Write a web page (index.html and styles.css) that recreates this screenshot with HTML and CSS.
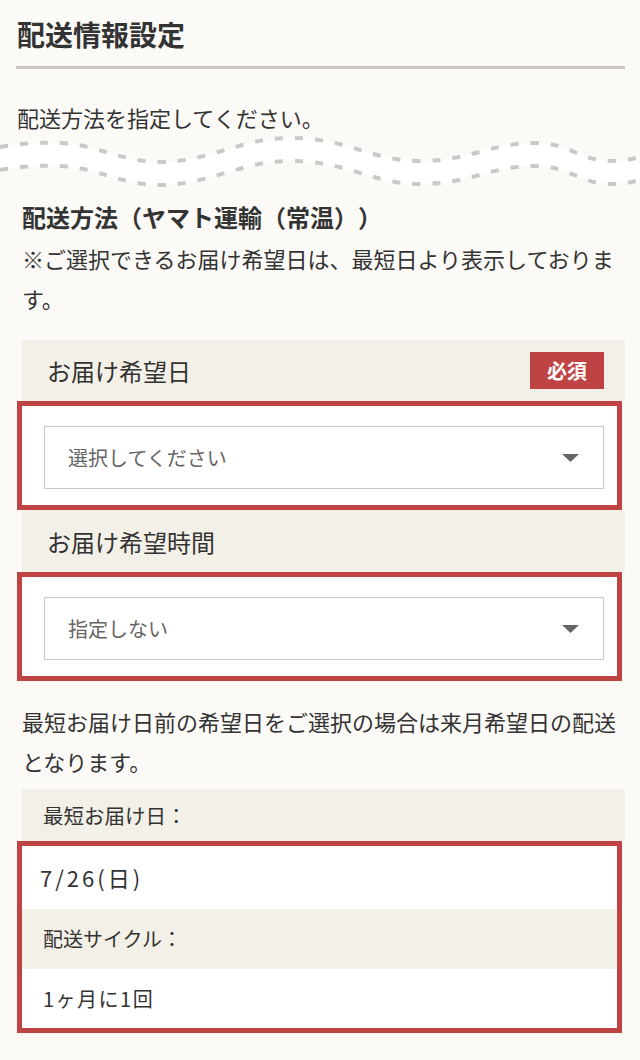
FILE: index.html
```html
<!DOCTYPE html>
<html lang="ja">
<head>
    <meta charset="UTF-8">
    <meta name="viewport" content="width=device-width, initial-scale=1.0">
    <title>配送情報設定</title>
    <link rel="stylesheet" href="styles.css">
</head>
<body>

<div class="page-head">
    <h1>配送情報設定</h1>
</div>
<p class="intro">配送方法を指定してください。</p>

<!-- wavy divider -->
<svg class="wave" viewBox="0 0 640 60" width="640" height="60">
    <path class="wave-band" d="M0 14 C25 10, 45 9, 60 10 C100 12, 120 29, 160 29 C210 29, 240 5, 290 5 C350 5, 370 28, 420 28 C470 28, 490 10, 535 10 C570 10, 580 28, 610 28 C625 28, 632 26, 640 24" transform="translate(0 11.5)"/>
    <path class="wave-line" d="M0 14 C25 10, 45 9, 60 10 C100 12, 120 29, 160 29 C210 29, 240 5, 290 5 C350 5, 370 28, 420 28 C470 28, 490 10, 535 10 C570 10, 580 28, 610 28 C625 28, 632 26, 640 24"/>
    <path class="wave-line" d="M0 14 C25 10, 45 9, 60 10 C100 12, 120 29, 160 29 C210 29, 240 5, 290 5 C350 5, 370 28, 420 28 C470 28, 490 10, 535 10 C570 10, 580 28, 610 28 C625 28, 632 26, 640 24" transform="translate(0 23)"/>
</svg>

<div class="section">
    <h2>配送方法（ヤマト運輸（常温））</h2>
    <p class="note">※ご選択できるお届け希望日は、最短日より表示しております。</p>

    <div class="field-label label-date">
        <span>お届け希望日</span>
        <span class="badge">必須</span>
    </div>
    <div class="marked">
        <div class="select">
            <span>選択してください</span>
            <svg class="arrow" viewBox="0 0 17 8" width="17" height="8"><polygon points="0,0 17,0 8.5,8"/></svg>
        </div>
    </div>

    <div class="field-label label-time">
        <span>お届け希望時間</span>
    </div>
    <div class="marked">
        <div class="select">
            <span>指定しない</span>
            <svg class="arrow" viewBox="0 0 17 8" width="17" height="8"><polygon points="0,0 17,0 8.5,8"/></svg>
        </div>
    </div>

    <p class="note note-next">最短お届け日前の希望日をご選択の場合は来月希望日の配送となります。</p>

    <div class="info-label">最短お届け日：</div>
    <div class="marked marked-info">
        <div class="info-value value-date">7/26(日)</div>
        <div class="info-label inner-label">配送サイクル：</div>
        <div class="info-value value-cycle">1ヶ月に1回</div>
    </div>
</div>

</body>
</html>
```

FILE: styles.css
```css
body {
    margin: 0;
    background-color: #fbfaf6;
    color: #333;
    font-family: "Noto Sans CJK JP", "Noto Sans", sans-serif;
    text-spacing-trim: space-all;
}
.page-head {
    margin: 0 15px 0 16px;
    padding: 16px 1px 14px;
    border-bottom: 3px solid #cdc8bd;
}
h1 {
    margin: 0;
    font-size: 28px;
    line-height: 36px;
    font-weight: bold;
}
.intro {
    margin: 0;
    padding: 33px 17px 0;
    font-size: 22px;
    line-height: 30px;
}
.wave {
    display: block;
    margin-top: 1px;
}
.wave-band {
    fill: none;
    stroke: #fff;
    stroke-width: 22;
}
.wave-line {
    fill: none;
    stroke: #c9c9c9;
    stroke-width: 4;
    stroke-dasharray: 8 12;
}
.section {
    padding: 0 15px 0 22px;
}
h2 {
    margin: 7px 0 0;
    font-size: 24px;
    line-height: 34px;
    font-weight: bold;
}
.note {
    margin: 4px 0 0;
    font-size: 22px;
    line-height: 40px;
}
.field-label {
    display: flex;
    justify-content: space-between;
    align-items: center;
    background-color: #f3f0e8;
    padding: 0 21px 0 25px;
    font-size: 24px;
}
.label-date {
    margin-top: 22px;
    height: 61px;
}
.label-time {
    height: 62px;
}
.badge {
    width: 74px;
    height: 37px;
    line-height: 37px;
    text-align: center;
    background-color: #c04343;
    color: #fff;
    font-size: 20px;
    font-weight: bold;
}
.marked {
    margin: 0 3px 0 -5px;
    border: 5px solid #c04343;
    background-color: #fff;
    padding: 20px 13px 16px 22px;
}
.select {
    display: flex;
    justify-content: space-between;
    align-items: center;
    height: 61px;
    border: 1px solid #c9c9c9;
    padding: 0 24px 0 23px;
    color: #666;
    font-size: 20px;
}
.arrow {
    fill: #666;
}
.note-next {
    margin-top: 20px;
}
.info-label {
    margin-top: 8px;
    height: 52px;
    line-height: 52px;
    padding-left: 21px;
    background-color: #f3f0e8;
    font-size: 20.5px;
}
.marked-info {
    padding: 0;
}
.inner-label {
    margin: 0;
    height: 60px;
    line-height: 60px;
    font-size: 20px;
}
.info-value {
    padding-left: 18px;
    background-color: #fff;
}
.value-date {
    height: 63px;
    line-height: 63px;
    font-size: 22px;
    letter-spacing: 3px;
}
.value-cycle {
    height: 59px;
    line-height: 59px;
    padding-left: 21px;
    font-size: 20px;
    letter-spacing: 1.5px;
}
```
